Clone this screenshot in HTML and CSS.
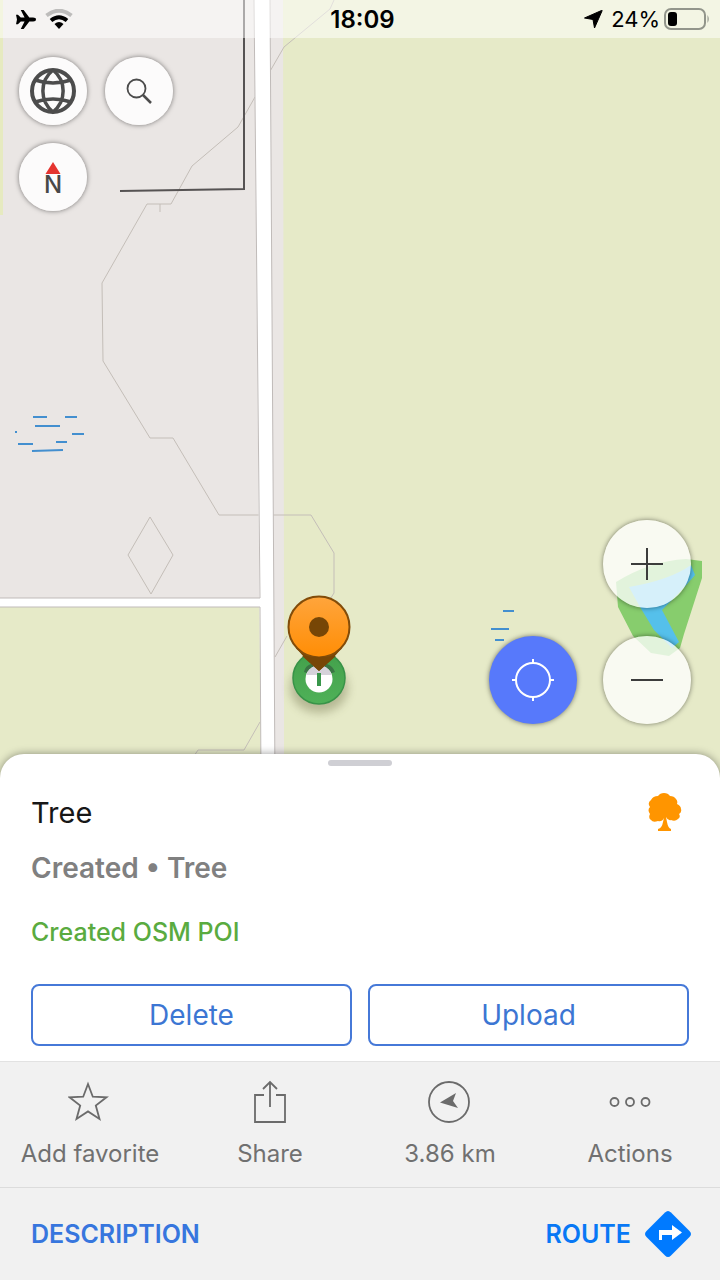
FILE: index.html
```html
<!DOCTYPE html>
<html lang="en">
<head>
<meta charset="utf-8">
<meta name="viewport" content="width=device-width, initial-scale=1">
<title>Map</title>
<link rel="stylesheet" href="styles.css">
</head>
<body>
<div class="screen">
  <svg class="map" viewBox="0 0 720 1280" preserveAspectRatio="xMidYMin slice" aria-hidden="true">
    <defs>
      <linearGradient id="pin" x1="0" y1="0" x2="0" y2="1">
        <stop offset="0" stop-color="#ffa53c"/>
        <stop offset="1" stop-color="#ff8d05"/>
      </linearGradient>
      <linearGradient id="poi" x1="0" y1="0" x2="0" y2="1">
        <stop offset="0" stop-color="#43a04b"/>
        <stop offset="1" stop-color="#4fb158"/>
      </linearGradient>
      <filter id="soft" x="-50%" y="-50%" width="200%" height="200%">
        <feGaussianBlur stdDeviation="5"/>
      </filter>
      <clipPath id="crown"><path d="M300 650h38v25h-38z"/></clipPath>
    </defs>
    <rect width="720" height="1280" fill="#e6eac8"/>
    <path d="M3 0H283L284 600V780H262V604H0V215H3z" fill="#eae6e4"/>
    <path d="M0 609H260V780H0z" fill="#e6eac8"/>
    <path d="M0 0H3V215H0z" fill="#e6eac0"/>
    <g fill="none" stroke="#c4beb8" stroke-width="1">
      <path d="M334 0L330 9L284 47L269 73"/>
      <path d="M255 97L238 127L192 166L171 204H147L102 283L103 361L150 438H173L219 515H311L334 553V593L320 615"/>
      <path d="M160 204V212M287 636L275 657M260 722L244 750H198L194 756"/>
      <path d="M150 517L173 555L151 594L128 555z"/>
    </g>
    <path d="M244 0V189L120 191" fill="none" stroke="#565353" stroke-width="2"/>
    <path d="M254 0L261 780H275L270 0z" fill="#fff"/>
    <path d="M0 598H261V607H0z" fill="#fff"/>
    <path d="M254 0L260 598H0M0 607H260L261 780M270 0L275 780" fill="none" stroke="#c0bbb9" stroke-width="1"/>
    <g fill="none" stroke="#438fcf" stroke-width="2">
      <path d="M33 417H47M65 417H77M35 426H60M72 434H84M18 444H33M56 442H67M32 451L63 450M16 431V433"/>
      <path d="M503 611H514M491 629H509M495 640H504"/>
    </g>
    <path d="M616 582Q650 561 686 559L702 561V578L684 634L680 648L669 656L651 653L633 636L618 607z" fill="#87cd6d"/>
    <path d="M629 587Q670 580 691 565L695 575Q686 586 662 610L679 642L672 648L654 630L640 607z" fill="#55c0eb"/>
    <ellipse cx="319" cy="688" rx="29" ry="25" fill="#5b5b35" opacity=".35" filter="url(#soft)"/>
    <circle cx="319" cy="678" r="26" fill="url(#poi)" stroke="#389348" stroke-width="1.5"/>
    <path d="M304 672q1-6 7-8q8-5 16 0q6 2 8 8l-3 1h-25z" fill="#3a7544"/>
    <circle cx="319" cy="679" r="13.500" fill="#fff"/>
    <circle cx="319" cy="679" r="13.500" fill="#d5d2da" clip-path="url(#crown)"/>
    <path d="M317 673h4v13h-4z" fill="#38964a"/>
    <path d="M296 648L304 657L319 671L334 657L342 648z" fill="#774606"/>
    <circle cx="319" cy="627" r="30.500" fill="url(#pin)" stroke="#824c09" stroke-width="2"/>
    <path d="M302 656Q319 658 336 656L319 671z" fill="#774606"/>
    <circle cx="319" cy="627" r="10" fill="#774606"/>
  </svg>

  <header class="status">
    <div class="status-side">
      <svg width="22" height="19" viewBox="0 0 23 20" aria-label="Airplane mode"><path d="M1 5H3L6 8H10L6 0H9L15 8H19Q22 8 22 10T19 12H15L9 20H6L10 12H6L3 15H1L2 10z"/></svg>
      <svg width="28" height="20" viewBox="0 0 28 20" aria-label="Wi-Fi"><path d="M1.500 6.500Q14-3 26.500 6.500" fill="none" stroke="#bdbcbb" stroke-width="4"/><path d="M6 11.500Q14 5 22 11.500" fill="none" stroke="#000" stroke-width="4"/><path d="M9.500 15Q14 11 18.500 15L14 20z"/></svg>
    </div>
    <time class="clock">18:09</time>
    <div class="status-side status-end">
      <svg width="19" height="18" viewBox="0 0 18 18" aria-label="Location"><path d="M0 8L17 0.500Q18 0 17.500 1L10 18L8.500 9.500z" stroke="#000"/></svg>
      <span class="charge">24%</span>
      <svg width="46" height="22" viewBox="0 0 46 22" aria-hidden="true"><rect x="1" y="1" width="40" height="20" rx="6" fill="none" stroke="#92958b" stroke-width="2"/><rect x="4" y="4" width="9" height="14" rx="3"/><path d="M43.500 7Q46 11 43.500 15z" fill="#92958b"/></svg>
    </div>
  </header>

  <main class="controls">
    <div class="top-controls">
      <button class="round small" aria-label="Map layers"><svg width="48" height="48" viewBox="0 0 48 48" fill="none" stroke="#4c4c4c" stroke-width="4"><circle cx="24" cy="24" r="21"/><path d="M24 3C10.500 14 10.500 34 24 45C37.500 34 37.500 14 24 3M6 13Q24 19 42 13M6 35Q24 29 42 35" stroke-width="3.500"/></svg></button>
      <button class="round small" aria-label="Search"><svg width="26" height="26" viewBox="0 0 26 26" fill="none" stroke="#4c4c4c" stroke-width="1.800"><circle cx="10.500" cy="10.500" r="9"/><path d="M17 17L25 25" stroke-width="2.500"/></svg></button>
      <button class="round small compass" aria-label="Compass, north"><svg width="16" height="12" viewBox="0 0 16 12" aria-hidden="true"><path d="M8 0L15.500 12H.5z" fill="#e5342f"/></svg><span>N</span></button>
    </div>
    <div class="bottom-controls">
      <button class="round large zoom-in" aria-label="Zoom in"><svg width="34" height="34" viewBox="0 0 34 34" stroke="#3c3c3c" stroke-width="2"><path d="M1 17H33M17 1V33"/></svg></button>
      <button class="round large locate" aria-label="My location"><svg width="44" height="44" viewBox="0 0 44 44" fill="none" stroke="#fff" stroke-width="2"><circle cx="22" cy="22" r="17"/><path d="M22 1V6M22 38V43M1 22H6M38 22H43"/></svg></button>
      <button class="round large" aria-label="Zoom out"><svg width="34" height="34" viewBox="0 0 34 34" stroke="#3c3c3c" stroke-width="2"><path d="M1 17H33"/></svg></button>
    </div>
  </main>

  <section class="sheet">
    <div class="handle"></div>
    <div class="details">
      <div class="heading">
        <h1>Tree</h1>
        <svg width="34" height="38" viewBox="0 0 34 38" fill="#ff9500" aria-hidden="true"><path d="M10 3Q12 0 16 0Q20 0 22 3Q26 3 28 6Q30 8 29 11Q33 13 33 16Q34 19 31 21Q33 24 30 26Q27 29 23 27Q20 28 18 24L19 29Q20 35 23 36V38H10V36Q14 35 15 29L16 25Q14 29 10 28Q5 30 3 27Q0 25 2 21Q-1 17 2 14Q-1 10 3 7Q5 3 10 3z"/></svg>
      </div>
      <p class="subtitle">Created • Tree</p>
      <p class="kind">Created OSM POI</p>
      <div class="buttons">
        <button class="outline">Delete</button>
        <button class="outline">Upload</button>
      </div>
    </div>
    <nav class="actions">
      <button class="action"><svg width="44" height="44" viewBox="0 0 44 44"><path d="M20 4L24.800 16.700L38.500 17.300L27.800 25.600L31.500 39L20 31.400L8.500 39L12.200 25.600L1.500 17.300L15.200 16.700z"/></svg><span>Add favorite</span></button>
      <button class="action"><svg width="44" height="44" viewBox="0 0 44 44"><path d="M16 15H7V42H37V15H28M22 27V2M15 9L22 2L29 9"/></svg><span>Share</span></button>
      <button class="action"><svg width="44" height="44" viewBox="0 0 44 44"><circle cx="21" cy="22" r="20"/><path d="M12 22.500L28 13L25 21L30 28z" fill="#6b6b6b" stroke="none"/></svg><span>3.86 km</span></button>
      <button class="action"><svg width="44" height="44" viewBox="0 0 44 44"><circle cx="6.500" cy="22" r="4"/><circle cx="22" cy="22" r="4"/><circle cx="37.500" cy="22" r="4"/></svg><span>Actions</span></button>
    </nav>
    <footer class="footer">
      <button class="link">DESCRIPTION</button>
      <button class="link route">ROUTE
        <svg width="46" height="46" viewBox="0 0 46 46" aria-hidden="true"><path d="M20 1.500Q23-1.500 26 1.500L44.500 20Q47.500 23 44.500 26L26 44.500Q23 47.500 20 44.500L1.500 26Q-1.500 23 1.500 20z" fill="#007aff"/><path d="M14 29V19H27V14L37 21.500L27 29V24H17V29z" fill="#fff"/></svg>
      </button>
    </footer>
  </section>
</div>
</body>
</html>
```
FILE: styles.css
```css
* {
  box-sizing: border-box;
}

body {
  margin: 0;
  font-family: Inter, "Liberation Sans", sans-serif;
}

button {
  margin: 0;
  padding: 0;
  border: 0;
  background: none;
  font: inherit;
  cursor: pointer;
}

svg {
  display: block;
  flex: none;
}

.screen {
  position: relative;
  display: flex;
  flex-direction: column;
  min-height: 100vh;
  overflow: hidden;
}

.map {
  position: absolute;
  inset: 0;
  width: 100%;
  height: 100%;
}

.status {
  position: relative;
  display: flex;
  align-items: center;
  height: 38px;
  padding: 0 10px 0 15px;
  background: rgba(255, 255, 255, 0.5);
  color: #000;
  font-size: 24px;
}

.status-side {
  display: flex;
  flex: 1;
  align-items: center;
  gap: 8px;
}

.status-end {
  justify-content: flex-end;
}

.charge {
  margin-right: -4px;
  font-size: 22px;
}

.clock {
  font-weight: 600;
}

.controls {
  position: relative;
  display: flex;
  flex: 1;
  flex-direction: column;
  justify-content: space-between;
}

.top-controls {
  display: grid;
  grid-template-columns: repeat(2, max-content);
  gap: 18px;
  padding: 19px;
}

.bottom-controls {
  display: grid;
  grid-template-columns: repeat(2, max-content);
  justify-content: end;
  gap: 28px 26px;
  padding: 0 29px 30px;
}

.round {
  display: flex;
  align-items: center;
  justify-content: center;
  border-radius: 50%;
  box-shadow: 0 0 5px rgba(0, 0, 0, 0.5);
}

.small {
  width: 68px;
  height: 68px;
  background: rgba(253, 252, 252, 0.95);
}

.large {
  width: 88px;
  height: 88px;
  background: rgba(255, 255, 255, 0.76);
}

.zoom-in {
  grid-column: 2;
}

.locate {
  background: #5779fb;
}

.compass {
  flex-direction: column;
  gap: 1px;
  padding-top: 2px;
  color: #484848;
  font-size: 24px;
  font-weight: 500;
  line-height: 20px;
}

.sheet {
  position: relative;
  border-radius: 24px 24px 0 0;
  background: #fff;
  box-shadow: 0 0 8px rgba(0, 0, 0, 0.4);
}

.handle {
  width: 64px;
  height: 6px;
  margin: 0 auto;
  border-radius: 3px;
  background: #cfcfd4;
  transform: translateY(6px);
}

.details {
  padding: 32px 31px 15px;
}

.heading {
  display: flex;
  align-items: center;
  justify-content: space-between;
  height: 40px;
  padding-right: 7px;
}

h1,
p {
  margin: 0;
}

h1 {
  color: #171717;
  font-size: 29px;
  font-weight: 400;
}

.subtitle {
  margin-top: 18px;
  color: #808080;
  font-size: 28px;
  font-weight: 600;
  line-height: 36px;
}

.kind {
  margin-top: 30px;
  color: #5aab40;
  font-size: 25px;
  font-weight: 500;
  line-height: 32px;
}

.buttons {
  display: grid;
  grid-template-columns: 1fr 1fr;
  gap: 16px;
  margin-top: 36px;
}

.outline {
  height: 62px;
  border: 2px solid #4679d8;
  border-radius: 8px;
  color: #3c76d3;
  font-size: 28px;
}

.actions {
  display: grid;
  grid-template-columns: repeat(4, 1fr);
  height: 126px;
  border-top: 1px solid #e2e2e2;
  background: #f1f1f1;
}

.action {
  display: flex;
  flex-direction: column;
  align-items: center;
  gap: 14px;
  padding-top: 18px;
  color: #707070;
  font-size: 24px;
  line-height: 32px;
}

.action svg {
  fill: none;
  stroke: #6b6b6b;
  stroke-width: 1.8;
}

.footer {
  display: flex;
  align-items: center;
  justify-content: space-between;
  height: 93px;
  padding: 0 29px 0 31px;
  border-top: 1px solid #dcdcdc;
  background: #f1f1f1;
}

.link {
  color: #3776de;
  font-size: 25px;
  font-weight: 600;
}

.route {
  display: flex;
  align-items: center;
  gap: 14px;
  color: #0878f5;
}
```
